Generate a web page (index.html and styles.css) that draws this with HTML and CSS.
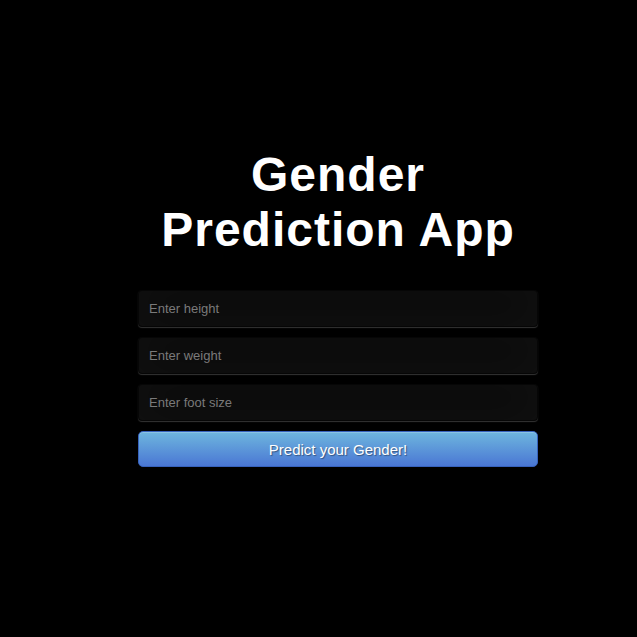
FILE: index.html
```html
<!DOCTYPE html>
<html>
<head>
<meta charset="utf-8">
<link rel="stylesheet" href="styles.css">
</head>
<body>
<div class="page">
  <div class="login">
    <h1 class="title">Gender<br>Prediction App</h1>
    <form class="form">
      <input class="field" type="text" placeholder="Enter height">
      <input class="field" type="text" placeholder="Enter weight">
      <input class="field" type="text" placeholder="Enter foot size">
      <button class="btn" type="button">Predict your Gender!</button>
    </form>
  </div>
</div>
</body>
</html>
```
FILE: styles.css
```css
html, body {
  margin: 0;
  padding: 0;
  background: #000;
  height: 100%;
}
body {
  font-family: "Liberation Sans", Arial, sans-serif;
}
.page {
  display: flex;
  justify-content: center;
  padding-left: 39px;
  padding-top: 147px;
}
.login {
  width: 400px;
}
.title {
  margin: 0 0 33px 0;
  color: #fff;
  font-size: 48px;
  font-weight: bold;
  line-height: 55px;
  letter-spacing: 1px;
  text-align: center;
  text-shadow: 0 0 10px rgba(0,0,0,0.3);
}
.form {
  display: flex;
  flex-direction: column;
}
.field {
  box-sizing: border-box;
  width: 100%;
  height: 37px;
  margin: 0 0 10px 0;
  padding: 0 10px;
  font-family: "Liberation Sans", Arial, sans-serif;
  font-size: 13px;
  color: #fff;
  background: #0a0a0a;
  border: 1px solid rgba(0,0,0,0.3);
  border-radius: 4px;
  outline: none;
  box-shadow: inset 0 -5px 45px rgba(100,100,100,0.08), 0 1px 1px rgba(255,255,255,0.2);
}
.field::placeholder {
  color: #7a7a7a;
}
.btn {
  box-sizing: border-box;
  width: 100%;
  height: 36px;
  padding: 0 14px;
  font-family: "Liberation Sans", Arial, sans-serif;
  font-size: 15px;
  color: #fff;
  background-color: #4a77d4;
  background-image: linear-gradient(to bottom, #6eb6de, #4a77d4);
  border: 1px solid #3762bc;
  border-radius: 5px;
  text-shadow: 1px 1px 1px rgba(0,0,0,0.4);
  box-shadow: inset 0 1px 0 rgba(255,255,255,0.2), 0 1px 2px rgba(0,0,0,0.5);
  cursor: pointer;
}
```
